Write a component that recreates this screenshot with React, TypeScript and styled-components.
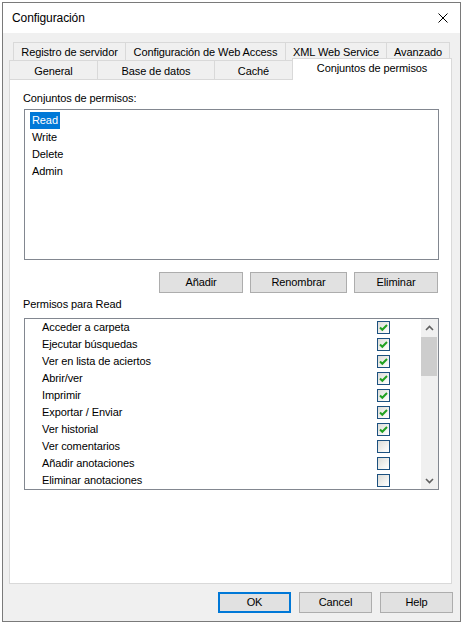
import styled, { createGlobalStyle } from "styled-components";

const GlobalStyle = createGlobalStyle`
  html, body {
    margin: 0;
    padding: 0;
    background: #ffffff;
  }
  body {
    font-family: "Liberation Sans", Arial, sans-serif;
    font-size: 11px;
    letter-spacing: -0.1px;
    color: #000000;
  }
`;

const Window = styled.div`
  box-sizing: border-box;
  width: 459px;
  height: 620px;
  margin: 2px 0 0 2px;
  border: 1px solid #7a7a7a;
  display: flex;
  flex-direction: column;
  background: #f0f0f0;
`;

const TitleBar = styled.div`
  flex: none;
  height: 30px;
  background: #ffffff;
  display: flex;
  align-items: center;
  justify-content: space-between;
  padding: 0 12px 0 9px;
`;

const Title = styled.span`
  font-size: 12px;
  line-height: 16px;
`;

const CloseIcon = styled.svg`
  display: block;
  width: 10px;
  height: 10px;
`;

const Client = styled.div`
  flex: 1;
  display: flex;
  flex-direction: column;
  padding: 9px 7px 8px 6px;
`;

const TabStrip = styled.div`
  width: 443px;
  display: flex;
  flex-direction: column;
`;

const TabRow = styled.div<{ $indent?: number; $height: number }>`
  display: flex;
  align-items: flex-end;
  height: ${(p) => p.$height}px;
  padding-left: ${(p) => p.$indent ?? 0}px;
`;

const Tab = styled.div<{ $width: number; $active?: boolean; $last?: boolean }>`
  box-sizing: border-box;
  flex: none;
  width: ${(p) => p.$width}px;
  height: ${(p) => (p.$active ? "22px" : "100%")};
  display: flex;
  justify-content: center;
  align-items: ${(p) => (p.$active ? "flex-start" : "center")};
  padding-top: 1px;
  border-top: 1px solid #d9d9d9;
  border-left: 1px solid #d9d9d9;
  border-right: ${(p) => (p.$last || p.$active ? "1px solid #d9d9d9" : "none")};
  background: ${(p) => (p.$active ? "#ffffff" : "#f0f0f0")};
  white-space: nowrap;
  line-height: 16px;
  ${(p) =>
    p.$active &&
    `
    position: relative;
    z-index: 1;
    margin-bottom: -1px;
  `}
`;

const Panel = styled.div`
  box-sizing: border-box;
  width: 443px;
  height: 505px;
  border: 1px solid #d9d9d9;
  background: #ffffff;
  padding: 10px 12px 0 14px;
  display: flex;
  flex-direction: column;
`;

const FieldLabel = styled.div<{ $gap?: number }>`
  line-height: 16px;
  margin-top: ${(p) => p.$gap ?? 0}px;
  margin-left: -1px;
`;

const ListBox = styled.div`
  box-sizing: border-box;
  height: 151px;
  margin-top: 3px;
  border: 1px solid #828790;
  background: #ffffff;
  padding: 2px 0 0 5px;
  display: flex;
  flex-direction: column;
  align-items: flex-start;
`;

const ListItem = styled.div<{ $selected?: boolean }>`
  height: 17px;
  line-height: 17px;
  padding: 0 2px;
  background: ${(p) => (p.$selected ? "#0078d7" : "transparent")};
  color: ${(p) => (p.$selected ? "#ffffff" : "#000000")};
`;

const ButtonRow = styled.div`
  display: flex;
  justify-content: flex-end;
  gap: 7px;
  margin-top: 12px;
  padding-right: 1px;
`;

const Button = styled.button<{ $width: number; $default?: boolean }>`
  box-sizing: border-box;
  width: ${(p) => p.$width}px;
  height: 21px;
  margin: 0;
  padding: 0 0 1px;
  font: inherit;
  letter-spacing: inherit;
  color: #000000;
  background: #e1e1e1;
  border: ${(p) => (p.$default ? "2px solid #0078d7" : "1px solid #adadad")};
  line-height: 16px;
`;

const PermList = styled.div`
  box-sizing: border-box;
  height: 172px;
  margin-top: 6px;
  border: 1px solid #828790;
  background: #ffffff;
  display: flex;
`;

const PermRows = styled.div`
  flex: 1;
  display: flex;
  flex-direction: column;
`;

const PermRow = styled.div`
  box-sizing: border-box;
  height: 17px;
  display: grid;
  grid-template-columns: 1fr 13px;
  align-items: center;
  padding: 0 31px 1px 17px;
  line-height: 16px;
`;

const CheckBox = styled.span`
  box-sizing: border-box;
  width: 13px;
  height: 13px;
  border: 1px solid #1c5180;
  background: linear-gradient(135deg, #dcdcd7 0%, #f6f6f4 70%, #ffffff 100%);
  display: flex;
  align-items: center;
  justify-content: center;
`;

const CheckMark = styled.svg`
  display: block;
  width: 11px;
  height: 11px;
`;

const ScrollBar = styled.div`
  flex: none;
  width: 17px;
  background: #f0f0f0;
  display: flex;
  flex-direction: column;
`;

const ScrollArrow = styled.div`
  height: 17px;
  display: flex;
  align-items: center;
  justify-content: center;
`;

const ScrollTrack = styled.div`
  flex: 1;
  padding: 1px 1px 0 0;
`;

const ScrollThumb = styled.div`
  height: 39px;
  background: #cdcdcd;
`;

const Footer = styled.div`
  display: flex;
  justify-content: flex-end;
  gap: 8px;
  margin-top: 8px;
`;

const permissionSets = ["Read", "Write", "Delete", "Admin"];

const permissions: [string, boolean][] = [
  ["Acceder a carpeta", true],
  ["Ejecutar búsquedas", true],
  ["Ver en lista de aciertos", true],
  ["Abrir/ver", true],
  ["Imprimir", true],
  ["Exportar / Enviar", true],
  ["Ver historial", true],
  ["Ver comentarios", false],
  ["Añadir anotaciones", false],
  ["Eliminar anotaciones", false],
];

function Chevron({ up }: { up?: boolean }) {
  return (
    <svg width="9" height="6" viewBox="0 0 9 6">
      <polyline
        points={up ? "1,5 4.5,1.5 8,5" : "1,1 4.5,4.5 8,1"}
        fill="none"
        stroke="#606060"
        strokeWidth="1.6"
      />
    </svg>
  );
}

export default function App() {
  return (
    <>
      <GlobalStyle />
      <Window>
        <TitleBar>
          <Title>Configuración</Title>
          <CloseIcon viewBox="0 0 10 10">
            <path d="M0.5 0.5 L9.5 9.5 M9.5 0.5 L0.5 9.5" stroke="#000" strokeWidth="1" />
          </CloseIcon>
        </TitleBar>
        <Client>
          <TabStrip>
            <TabRow $indent={4} $height={18}>
              <Tab $width={112}>Registro de servidor</Tab>
              <Tab $width={160}>Configuración de Web Access</Tab>
              <Tab $width={101}>XML Web Service</Tab>
              <Tab $width={64} $last>
                Avanzado
              </Tab>
            </TabRow>
            <TabRow $height={19}>
              <Tab $width={88}>General</Tab>
              <Tab $width={117}>Base de datos</Tab>
              <Tab $width={78}>Caché</Tab>
              <Tab $width={160} $active>
                Conjuntos de permisos
              </Tab>
            </TabRow>
          </TabStrip>
          <Panel>
            <FieldLabel>Conjuntos de permisos:</FieldLabel>
            <ListBox>
              {permissionSets.map((name, i) => (
                <ListItem key={name} $selected={i === 0}>
                  {name}
                </ListItem>
              ))}
            </ListBox>
            <ButtonRow>
              <Button $width={84}>Añadir</Button>
              <Button $width={97}>Renombrar</Button>
              <Button $width={84}>Eliminar</Button>
            </ButtonRow>
            <FieldLabel $gap={3}>Permisos para Read</FieldLabel>
            <PermList>
              <PermRows>
                {permissions.map(([label, checked]) => (
                  <PermRow key={label}>
                    <span>{label}</span>
                    <CheckBox>
                      {checked && (
                        <CheckMark viewBox="0 0 11 11">
                          <polyline
                            points="2,5.5 4.3,7.8 9,3"
                            fill="none"
                            stroke="#21a121"
                            strokeWidth="2"
                          />
                        </CheckMark>
                      )}
                    </CheckBox>
                  </PermRow>
                ))}
              </PermRows>
              <ScrollBar>
                <ScrollArrow>
                  <Chevron up />
                </ScrollArrow>
                <ScrollTrack>
                  <ScrollThumb />
                </ScrollTrack>
                <ScrollArrow>
                  <Chevron />
                </ScrollArrow>
              </ScrollBar>
            </PermList>
          </Panel>
          <Footer>
            <Button $width={73} $default>
              OK
            </Button>
            <Button $width={73}>Cancel</Button>
            <Button $width={73}>Help</Button>
          </Footer>
        </Client>
      </Window>
    </>
  );
}
